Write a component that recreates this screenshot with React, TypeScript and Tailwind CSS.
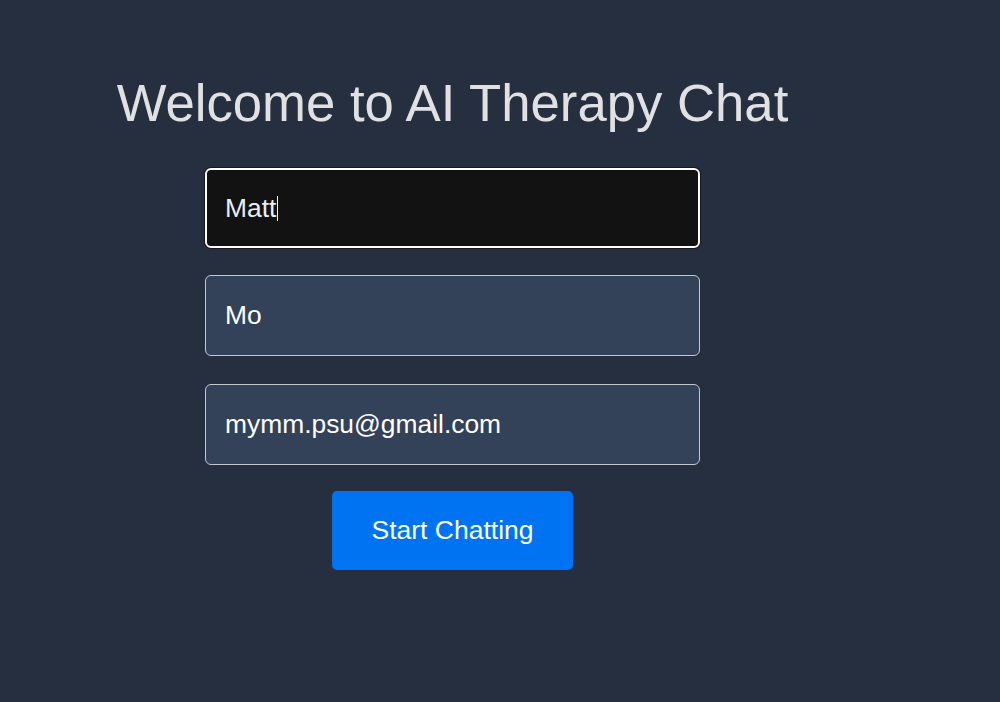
import React from "react";

export default function App() {
  const font = { fontFamily: '"Liberation Sans", Arial, sans-serif' };
  return (
    <div className="min-h-[702px] w-full bg-[#262f3f]" style={font}>
      <div className="w-[905px] flex flex-col items-center pt-[73px]">
        <h1 className="text-[52.7px] leading-[60px] text-[#e1e1e3] font-normal">
          Welcome to AI Therapy Chat
        </h1>
        <div className="mt-[35px] w-[495px] h-[80px] rounded-[6px] border-2 border-white bg-[#121212] flex items-center pl-[18px] shadow-[0_0_0_1px_#15181d]">
          <span className="text-[26.4px] text-[#e8eef4] leading-none">Matt</span>
          <span className="w-px h-[25px] bg-[#e8eef4] ml-px" />
        </div>
        <div className="mt-[27px] w-[495px] h-[81px] rounded-[6px] border border-[#c3c7cf] bg-[#334159] flex items-center pl-[19px]">
          <span className="text-[26.4px] text-white leading-none">Mo</span>
        </div>
        <div className="mt-[28px] w-[495px] h-[81px] rounded-[6px] border border-[#c3c7cf] bg-[#334159] flex items-center pl-[19px]">
          <span className="text-[26.4px] text-white leading-none">mymm.psu@gmail.com</span>
        </div>
        <button className="mt-[26px] w-[241px] h-[79px] rounded-[5px] bg-[#0073f2] text-white text-[26.5px] leading-none flex items-center justify-center">
          Start Chatting
        </button>
      </div>
    </div>
  );
}
